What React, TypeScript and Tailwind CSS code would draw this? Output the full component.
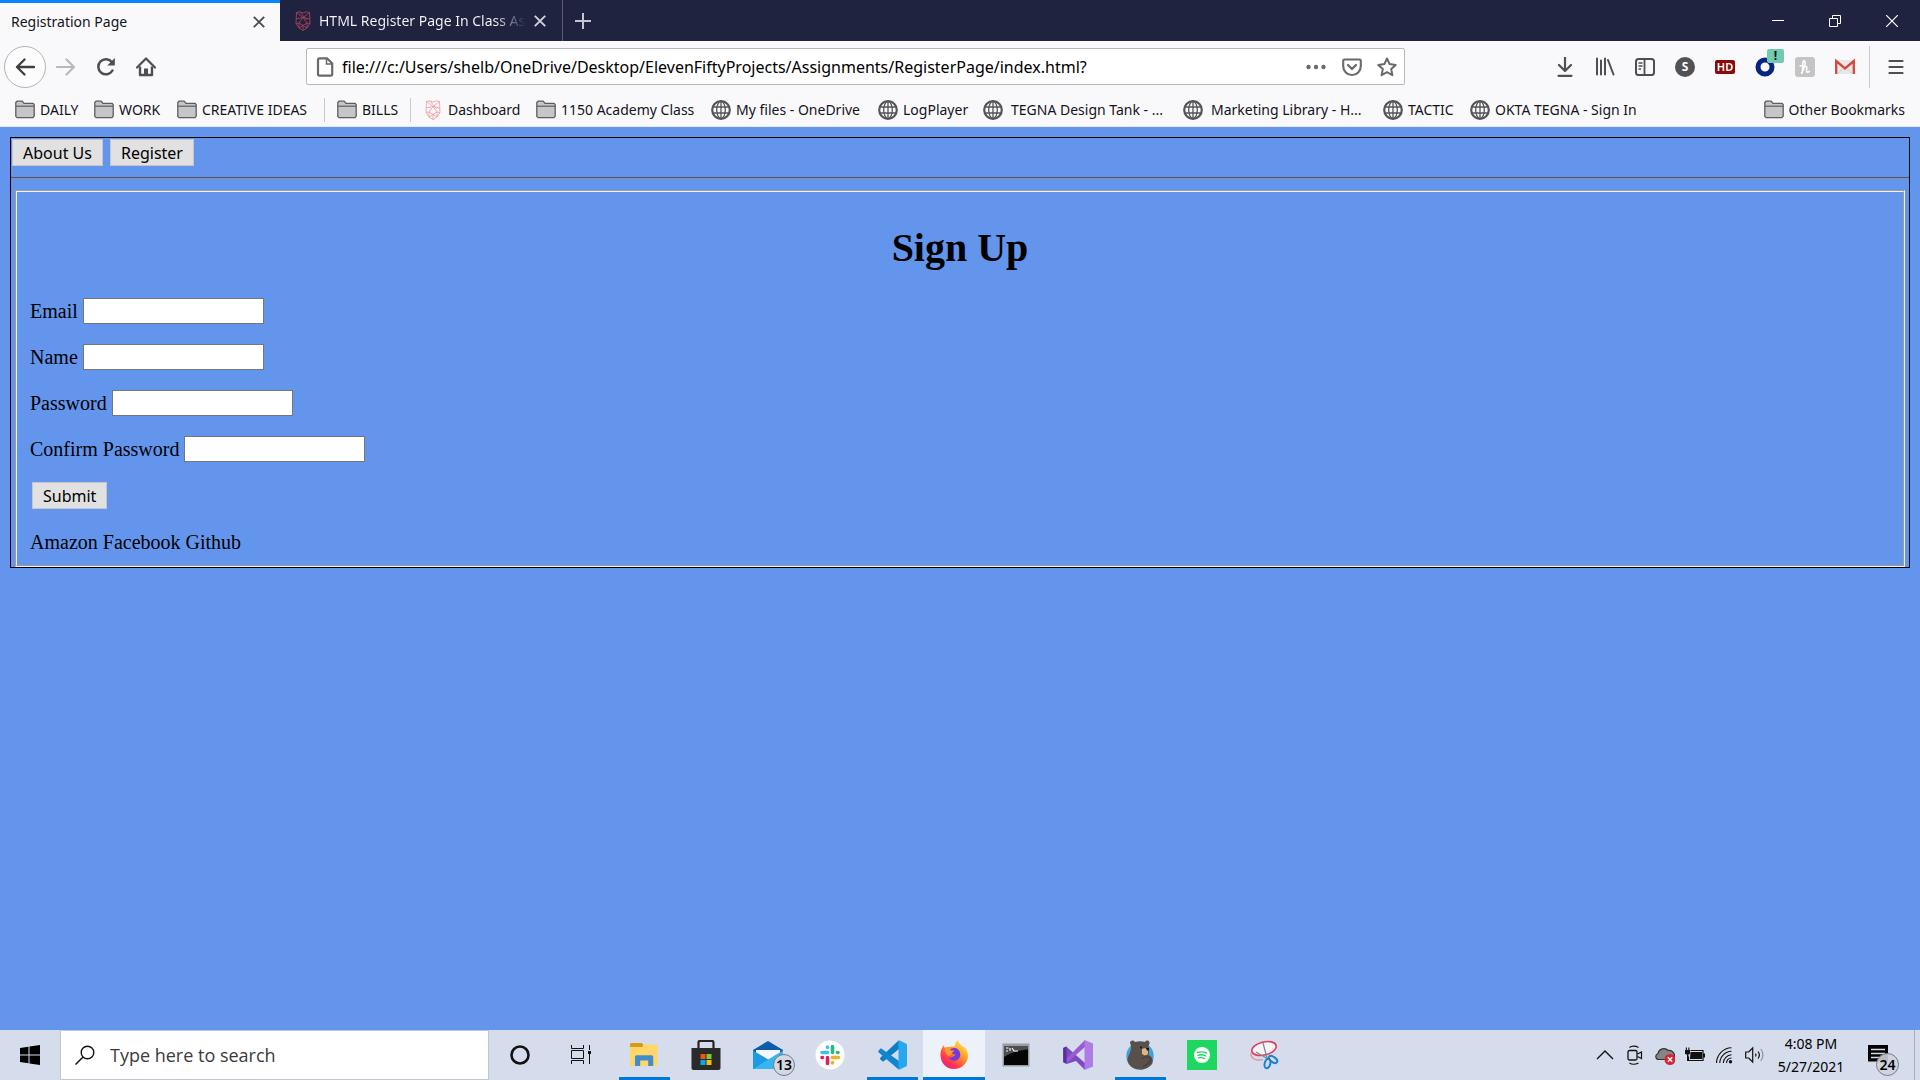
import React from "react";

type IconProps = { children: React.ReactNode; size?: string; box?: string };

function Icon({ children, size = "size-5", box = "0 0 20 20" }: IconProps) {
  return (
    <svg viewBox={box} className={`${size} shrink-0`} fill="none" aria-hidden="true">
      {children}
    </svg>
  );
}

const INK = "#4f4f52";

function FolderIcon() {
  return (
    <Icon>
      <path d="M.8 2.5 2 1.2h5.2L9 3.4h9.2l1 1.2v11.6l-1.2 1.4H2L.8 16.400z" fill="#c6c6c9" stroke="#5d5d60" strokeWidth="1.3" strokeLinejoin="round" />
      <path d="M1 6.200h18" stroke="#5d5d60" strokeWidth="1.2" />
    </Icon>
  );
}

function GlobeIcon() {
  return (
    <Icon>
      <circle cx="10" cy="10" r="8.800" stroke="#545456" strokeWidth="2.200" />
      <ellipse cx="10" cy="10" rx="4.300" ry="8.600" stroke="#545456" strokeWidth="1.300" />
      <path d="M10 1.500v17M2 7h16M2 13h16" stroke="#545456" strokeWidth="1.300" />
    </Icon>
  );
}

function ShieldIcon({ color }: { color: string }) {
  return (
    <Icon size="h-5 w-4" box="0 0 16 20">
      <path
        d="M1.500 1.500 4.500.8 8 2 11.500.8l3 .7.500 11L12 17l-4 2.500L4 17 1 12.500zM1.500 1.500 8 6.500l6.500-5M1 8l7-1.500L15 8M8 6.500 4 12l4 2.500 4-2.500-4-5.500M1 12.500l3-.5v5l4-2.500 4 2.500v-5l3 .5M4.500.8 12 9M8 14.500v5"
        stroke={color}
        strokeWidth=".8"
      />
    </Icon>
  );
}

function CloseIcon() {
  return (
    <Icon size="size-3" box="0 0 12 12">
      <path d="m.8.8 10.400 10.400M11.200.8.8 11.200" stroke="currentColor" strokeWidth="1.900" />
    </Icon>
  );
}

function TabStrip() {
  return (
    <header className="flex h-[41px] bg-[#202340] text-sm">
      <div className="flex w-[280px] items-center border-t-3 border-[#0a84ff] bg-[#f9f9fb] pl-[11px] pr-[15px]">
        <button className="flex-1 text-left text-[#15141a]">Registration Page</button>
        <button aria-label="Close Registration Page" className="text-[#4a4a4f]"><CloseIcon /></button>
      </div>
      <div className="flex w-[283px] items-center border-r border-[#5a5c78] pl-[15px] pr-4 text-[#f9f9fa]">
        <ShieldIcon color="#b5445c" />
        <button className="ml-2 mr-2 flex-1 overflow-hidden whitespace-nowrap bg-linear-to-r from-[#f9f9fa] from-85% to-[#202340] bg-clip-text text-left text-transparent">
          HTML Register Page In Class As
        </button>
        <button aria-label="Close HTML Register Page" className="text-[#d2d2dc]"><CloseIcon /></button>
      </div>
      <button aria-label="New tab" className="flex w-10 items-center justify-center text-[#c4c5d2]">
        <Icon size="size-4" box="0 0 16 16"><path d="M8 0v16M0 8h16" stroke="currentColor" strokeWidth="2" /></Icon>
      </button>
      <div className="ml-auto flex text-white">
        <button aria-label="Minimize" className="flex w-[57px] items-center justify-center">
          <Icon size="size-3" box="0 0 12 12"><path d="M0 5.500h12" stroke="currentColor" /></Icon>
        </button>
        <button aria-label="Restore" className="flex w-[57px] items-center justify-center">
          <Icon size="size-3" box="0 0 12 12"><path d="M.5 3.500h8v8h-8zM3.500 3V.5h8v8H9" stroke="currentColor" /></Icon>
        </button>
        <button aria-label="Close window" className="flex w-[57px] items-center justify-center">
          <Icon size="size-3" box="0 0 12 12"><path d="m0 0 12 12M12 0 0 12" stroke="currentColor" strokeWidth="1.200" /></Icon>
        </button>
      </div>
    </header>
  );
}

const tools: { label: string; icon: React.ReactNode }[] = [
  { label: "Downloads", icon: <Icon><path d="M10 0v13M4 8l6 6 6-6M3.500 18.800h13" stroke={INK} strokeWidth="2.200" strokeLinecap="round" strokeLinejoin="round" /></Icon> },
  { label: "Library", icon: <Icon><path d="M2 1.500v16M6 3.500v14M10 1.500v16M13 3l5.500 14.500" stroke={INK} strokeWidth="2" strokeLinecap="round" /></Icon> },
  { label: "Sidebars", icon: <Icon><rect x="1" y="2" width="18" height="16" rx="2.500" stroke={INK} strokeWidth="2" /><path d="M9.500 2v16" stroke={INK} strokeWidth="1.800" /><path d="M3.500 6h4M3.500 9h4M3.500 12h2.500" stroke={INK} strokeWidth="1.300" /></Icon> },
  { label: "Account", icon: <span className="flex size-5 items-center justify-center rounded-full bg-[#525254] text-xs font-bold text-white">S</span> },
  { label: "HD video", icon: <span className="flex h-[14px] w-5 items-center justify-center rounded-xs bg-[#8a0a0a] text-[11px] font-semibold leading-3 text-white">HD</span> },
  {
    label: "Okta",
    icon: (
      <span className="relative">
        <Icon><circle cx="10" cy="10" r="7" stroke="#05257f" strokeWidth="5" /></Icon>
        <span className="absolute -top-2 left-3 flex h-[14px] w-[17px] items-center justify-center rounded-xs bg-[#72cbb0] text-xs font-bold text-black">!</span>
      </span>
    ),
  },
  { label: "Honey", icon: <Icon><rect width="20" height="20" rx="3" fill="#c4c4c5" /><path d="M6.500 16C9 12 10.500 7.500 10 4.800 9.600 3 7.800 3.600 7.800 6L7.300 16M7.500 12c1.500-2.800 4.500-3.600 4.400-1.200l-.4 3.200c0 1.800 1.700 1.700 3 .3M5 8.800h3" stroke="#fff" strokeWidth="1.500" strokeLinecap="round" /></Icon> },
  { label: "Gmail", icon: <Icon><path d="M1 3h18v14H1z" fill="#e9e6e6" /><path d="M1.200 17V4L10 11.500 18.800 4v13" stroke="#d5463c" strokeWidth="2.300" /><path d="m3 16.500 5-5M17 16.500l-5-5" stroke="#d3d0d0" /></Icon> },
];

function Toolbar() {
  return (
    <div className="flex h-[51px] items-center bg-[#f9f9fb] pl-1">
      <button aria-label="Back" className="flex size-[42px] items-center justify-center rounded-full border border-[#b4b4b8] bg-[#fcfcfd]">
        <Icon><path d="M19 10H2M9.500 2.500 2 10l7.500 7.500" stroke="#3f3f42" strokeWidth="2.300" strokeLinecap="round" strokeLinejoin="round" /></Icon>
      </button>
      <button aria-label="Forward" disabled className="flex w-10 justify-center">
        <Icon><path d="M1 10h17M10.500 2.500 18 10l-7.500 7.500" stroke="#b9b9bc" strokeWidth="2.200" strokeLinecap="round" strokeLinejoin="round" /></Icon>
      </button>
      <button aria-label="Reload" className="flex w-10 justify-center">
        <Icon><path d="M16.500 13.500A7.600 7.600 0 1 1 16 5.200" stroke={INK} strokeWidth="2.500" strokeLinecap="round" /><path d="M18.800 1v7.500h-7.500z" fill={INK} /></Icon>
      </button>
      <button aria-label="Home" className="flex w-10 justify-center">
        <Icon><path d="m1 10.500 9-9 9 9" stroke={INK} strokeWidth="2.200" strokeLinecap="round" strokeLinejoin="round" /><path d="M4 9.500V18h12V9.500" stroke={INK} strokeWidth="2.400" strokeLinejoin="round" /><path d="M8 18v-6.500h4V18" fill={INK} /></Icon>
      </button>
      <div className="ml-[140px] mr-[140px] flex h-[37px] flex-1 items-center rounded-xs border border-[#b8b8bd] bg-white pl-2">
        <Icon><path d="M3 3c0-1 .8-1.700 1.700-1.700H12l5.200 5.200V17c0 1-.8 1.700-1.700 1.700H4.700C3.800 18.700 3 18 3 17z" stroke="#6a6a6d" strokeWidth="2.200" /><path d="M11.500 1.500V7H17" stroke="#6a6a6d" strokeWidth="1.500" /></Icon>
        <input
          aria-label="Address"
          defaultValue="file:///c:/Users/shelb/OneDrive/Desktop/ElevenFiftyProjects/Assignments/RegisterPage/index.html?"
          className="ml-[7px] h-8 min-w-0 flex-1 bg-transparent text-base text-black outline-none"
        />
        <button aria-label="Page actions" className="flex w-9 justify-center">
          <Icon><circle cx="2.500" cy="10" r="2.200" fill="#6a6a6d" /><circle cx="10" cy="10" r="2.200" fill="#6a6a6d" /><circle cx="17.500" cy="10" r="2.200" fill="#6a6a6d" /></Icon>
        </button>
        <button aria-label="Save to Pocket" className="flex w-9 justify-center">
          <Icon><path d="M2.500 2.500h15c.8 0 1.300.5 1.300 1.300v5.400a8.800 8.800 0 0 1-17.600 0V3.800c0-.8.500-1.300 1.300-1.300z" stroke="#6a6a6d" strokeWidth="2.100" /><path d="m6 8 4 4 4-4" stroke="#6a6a6d" strokeWidth="2.300" strokeLinecap="round" strokeLinejoin="round" /></Icon>
        </button>
        <button aria-label="Bookmark this page" className="flex w-[34px] justify-center">
          <Icon><path d="m10 1.500 2.600 5.600 6.100.8-4.500 4.200 1.200 6.100L10 15.200l-5.400 3 1.200-6.100L1.300 7.900l6.100-.8z" stroke="#6a6a6d" strokeWidth="2" strokeLinejoin="round" /></Icon>
        </button>
      </div>
      {tools.map((t) => (
        <button key={t.label} aria-label={t.label} className="flex w-10 justify-center">{t.icon}</button>
      ))}
      <span className="ml-1 h-[42px] w-px bg-[#c9c9cc]" />
      <button aria-label="Menu" className="mr-1 ml-1.5 flex w-10 justify-center">
        <Icon><path d="M3.500 4h13M3.500 10h13M3.500 16h13" stroke={INK} strokeWidth="2.200" strokeLinecap="round" /></Icon>
      </button>
    </div>
  );
}

type Mark = { label: string; icon: "folder" | "globe" | "shield"; width: string; gap?: string; divider?: boolean };

const marks: Mark[] = [
  { label: "DAILY", icon: "folder", width: "w-[79px]" },
  { label: "WORK", icon: "folder", width: "w-[83px]" },
  { label: "CREATIVE IDEAS", icon: "folder", width: "w-[147px]", divider: true },
  { label: "BILLS", icon: "folder", width: "w-[73px]", divider: true },
  { label: "Dashboard", icon: "shield", width: "w-[113px] pl-0.5", gap: "gap-[7px]" },
  { label: "1150 Academy Class", icon: "folder", width: "w-[175px]" },
  { label: "My files - OneDrive", icon: "globe", width: "w-[167px]" },
  { label: "LogPlayer", icon: "globe", width: "w-[105px]" },
  { label: "TEGNA Design Tank - ...", icon: "globe", width: "w-[200px]", gap: "gap-2" },
  { label: "Marketing Library - H...", icon: "globe", width: "w-[200px]", gap: "gap-2" },
  { label: "TACTIC", icon: "globe", width: "w-[87px]" },
  { label: "OKTA TEGNA - Sign In", icon: "globe", width: "w-[180px]" },
];

function BookmarksBar() {
  return (
    <nav aria-label="Bookmarks" className="flex h-[35px] items-center border-b border-[#e4e9f4] bg-[#f9f9fb] pt-0.5 pl-[15px] pr-[15px] text-sm text-[#15141a]">
      {marks.map((m) => (
        <React.Fragment key={m.label}>
          <a href="#" className={`flex shrink-0 items-center whitespace-nowrap ${m.gap ?? "gap-[5px]"} ${m.width}`}>
            {m.icon === "folder" && <FolderIcon />}
            {m.icon === "globe" && <GlobeIcon />}
            {m.icon === "shield" && <ShieldIcon color="#ee9a9f" />}
            {m.label}
          </a>
          {m.divider && <span className="mr-3 h-6 w-px shrink-0 bg-[#c9c9cc]" />}
        </React.Fragment>
      ))}
      <a href="#" className="ml-auto flex items-center gap-[5px] whitespace-nowrap">
        <FolderIcon />
        Other Bookmarks
      </a>
    </nav>
  );
}

const pageButton = "h-[27px] border border-[#c3c6cc] bg-[#e1e1e1] px-2.5 font-['Noto_Sans',sans-serif] text-base leading-6 text-black";

const fields = [
  { id: "email", label: "Email", type: "email" },
  { id: "name", label: "Name", type: "text" },
  { id: "password", label: "Password", type: "password" },
  { id: "confirm", label: "Confirm Password", type: "password" },
];

function RegisterPage() {
  return (
    <main className="flex-1 bg-[#6495ed] p-2.5 font-['Liberation_Serif',serif] text-xl text-black">
      <div className="border border-black">
        <div className="flex gap-[7px] p-px">
          <button className={pageButton}>About Us</button>
          <button className={pageButton}>Register</button>
        </div>
        <hr className="mt-2.5 border-t border-b border-t-[#4d5560] border-b-[#8793a8]" />
        <form onSubmit={(e) => e.preventDefault()} className="mx-1 mt-[11px] border-2 border-[#f0f0f0] px-[13px] pb-2.5 [border-style:groove]">
          <h1 className="mt-[33px] mb-[27px] text-center text-[40px] font-bold leading-[46px]">Sign Up</h1>
          {fields.map((f) => (
            <div key={f.id} className="mb-5 flex items-center gap-[5px]">
              <label htmlFor={f.id} className="leading-[26px]">{f.label}</label>
              <input id={f.id} type={f.type} className="h-[26px] w-[181px] border border-[#767676] bg-white px-1 text-base outline-none" />
            </div>
          ))}
          <button type="submit" className={`${pageButton} ml-0.5 block`}>Submit</button>
          <p className="mt-5 leading-[26px]">Amazon Facebook Github</p>
        </form>
      </div>
    </main>
  );
}

type App = { label: string; icon: React.ReactNode; state?: "open" | "active"; badge?: string };

const apps: App[] = [
  { label: "Cortana", icon: <Icon size="size-[30px]" box="0 0 30 30"><circle cx="15" cy="15" r="8.500" stroke="#111" strokeWidth="2.600" /></Icon> },
  { label: "Task View", icon: <Icon size="size-[30px]" box="0 0 30 30"><path d="M4.500 5v3.500h12V5M4.500 24v-3.500h12V24M4.500 10.500h12v8h-12zM22.500 5v5M22.500 14v10" stroke="#111" strokeWidth="1" /><path d="M21 11h3v3h-3z" fill="#111" /></Icon> },
  { label: "File Explorer", state: "open", icon: <Icon size="size-[30px]" box="0 0 30 30"><path d="M1 4.500C1 3.500 2 3 3 3h10l2 3-2 3H1z" fill="#d99a13" /><path d="M1 7h12l2-2.500h12c1 0 1.500.5 1.500 1.500v19c0 .6-.4 1-1 1H2c-.6 0-1-.4-1-1z" fill="#ffd667" /><path d="M6 26V17c0-1 .6-1.700 1.600-1.700h15c1 0 1.600.7 1.600 1.700v9h-5v-5.500h-8V26z" fill="#3f8dcd" /></Icon> },
  { label: "Microsoft Store", icon: <Icon size="size-[30px]" box="0 0 30 30"><path d="M7.500 9V2.500c0-1 .6-1.600 1.600-1.600h11.800c1 0 1.600.6 1.600 1.600V9" stroke="#252525" strokeWidth="2.200" /><path d="M.5 8h29v20c0 1.200-.8 2-2 2h-25c-1.200 0-2-.8-2-2z" fill="#292a29" /><path d="M9.500 14h5v5h-5z" fill="#f1511b" /><path d="M15.500 14h5v5h-5z" fill="#80cc28" /><path d="M9.500 20h5v5h-5z" fill="#00adef" /><path d="M15.500 20h5v5h-5z" fill="#fbbc09" /></Icon> },
  { label: "Mail", badge: "13", icon: <Icon size="size-[30px]" box="0 0 30 30"><path d="M0 10 15 1l15 9v18c0 .6-.4 1-1 1H0z" fill="#0b5cad" /><path d="M3 10h24v12H3z" fill="#f4f8fc" /><path d="M0 10.500 16 20 0 29z" fill="#1c9be4" /><path d="m30 10.500-15 9L0 29h29c.6 0 1-.4 1-1z" fill="#36b5ee" /></Icon> },
  {
    label: "Slack",
    icon: (
      <Icon size="size-[30px]" box="0 0 30 30">
        <circle cx="15" cy="15" r="14.500" fill="#fff" />
        <path d="M12.500 7v.500M7 12.500h5.500" stroke="#36c5f0" strokeWidth="3.600" strokeLinecap="round" />
        <path d="M17.500 6.500v6M23 12.500h-.500" stroke="#2eb67d" strokeWidth="3.600" strokeLinecap="round" />
        <path d="M17.500 17.500h6M17.500 22.500v.500" stroke="#ecb22e" strokeWidth="3.600" strokeLinecap="round" />
        <path d="M12.500 17.500v6M7 17.500h.500" stroke="#e01e5a" strokeWidth="3.600" strokeLinecap="round" />
      </Icon>
    ),
  },
  { label: "Visual Studio Code", state: "open", icon: <Icon size="size-[30px]" box="0 0 30 30"><path d="M21 1 3.500 17.500c-.6.600-.6 1.300 0 2L5 21c.6.500 1.300.5 2 0L22 9V1z" fill="#0f7dc4" /><path d="M21 29 1.700 12.500c-.6-.6-.6-1.300 0-2L3 9c.6-.6 1.300-.6 2-.1L22 21v8z" fill="#1186d0" /><path d="m21.500 0 7 3.200c1 .5 1.500 1.200 1.500 2.300v19c0 1.100-.5 1.800-1.500 2.300l-7 3.200z" fill="#27a7ee" /></Icon> },
  {
    label: "Firefox",
    state: "active",
    icon: (
      <Icon size="size-[30px]" box="0 0 30 30">
        <defs>
          <linearGradient id="fox" x1="24" y1="3" x2="6" y2="27" gradientUnits="userSpaceOnUse"><stop stopColor="#ffe23e" /><stop offset=".4" stopColor="#ff9428" /><stop offset=".75" stopColor="#ff3750" /><stop offset="1" stopColor="#e9207a" /></linearGradient>
        </defs>
        <path d="M1.500 13C2 9 3.500 7 5 5c0 1.500.5 2.500 1 3 1.500-1 3-1.200 4.500-1L16 6c0-2.500 1-4.500 3-6 .3 2.500 2 4 4 6 1 .5 1.500 1 2 2l.3-1.500C27.500 9 29 12 29 15.500 29 23 22.800 29 15 29S.8 23 1.500 13z" fill="url(#fox)" />
        <path d="M10 11c2-3 6-4 9-1.500 3 2.500 3 7 .5 9.500-3 3-8.500 2-10-2 2 1 4 .5 5.500-1 1-.8 2-.8 1.500-1.500-2 0-3-.5-4-2z" fill="#7b38d8" />
        <path d="M6 8c1.500-1.200 3.500-1.200 5-1-1 1.500-.5 3 1 3.500h3c.5 1.500-2.500 2-3 3-.3 1.800-1.300 2-2.500 2.500C7 14 5.500 11.500 6 8z" fill="#ff9a2b" />
      </Icon>
    ),
  },
  { label: "Command Prompt", icon: <Icon size="size-[30px]" box="0 0 30 30"><path d="M1.500 3.500h27v23h-27z" fill="#9b9da1" /><path d="M3 6h24v19H3z" fill="#050505" /><path d="M3 6h24v3.500C18 10 9 13 3 17z" fill="#4b4d50" /><path d="M5 8h2.500M5 11h2M9 8v3M11 8l2 3h4" stroke="#fff" strokeWidth="1.100" /></Icon> },
  { label: "Visual Studio", icon: <Icon size="size-[30px]" box="0 0 30 30"><path d="m.2 8 3-1.500L22 23v7L13 21 3.500 24l-3-1.500z" fill="#8049bf" /><path d="m.2 22 3 1.500L22 7V0L13 9z" fill="#9a5bd5" /><path d="M.2 8 3.500 6.500V23.500L.2 22z" fill="#57309c" /><path d="M21.500 0 30 3.500v23L21.500 30z" fill="#b07be6" /></Icon> },
  {
    label: "Bear app",
    state: "open",
    icon: (
      <Icon size="size-[30px]" box="0 0 30 30">
        <circle cx="15" cy="16" r="13.700" fill="#3fa3df" />
        <path d="M5 3c0-3 4-3.500 5-1 3-1 7-1 10 0 1.500-2.500 5-1.500 4.500 1.500-.2 1-.8 1.500-1 2.500.5 4 1 7 0 9 3 1 5 4 4 8-2 4-7 6.500-12 6.500C9 29.500 4 26 2.500 21c0-5 3-8 3.500-12 .3-2 0-4-1-6z" fill="#594f4b" />
        <path d="M17 9c2-1.500 5-1 6 1v4c-2 2-5 1.500-6-.500z" fill="#e2b47e" />
        <circle cx="16" cy="7.500" r=".9" fill="#111" /><path d="M21 8h3v2.500h-2z" fill="#111" />
        <path d="M17 19c2-3 7-3 9 0-1 4-5 6-8 8" stroke="#453c39" strokeWidth="1.200" />
      </Icon>
    ),
  },
  { label: "Spotify", icon: <Icon size="size-[30px]" box="0 0 30 30"><path d="M0 0h30v30H0z" fill="#1ed760" /><circle cx="15" cy="15" r="8" fill="#fff" /><path d="M10.500 12.500c3-1 6.500-.7 9.200.7M11 15.300c2.700-.8 5.500-.5 7.800.7M11.500 17.900c2.200-.6 4.300-.3 6.200.7" stroke="#1ed760" strokeWidth="1.400" strokeLinecap="round" /></Icon> },
  { label: "Snipping Tool", icon: <Icon size="size-[30px]" box="0 0 30 30"><ellipse cx="15" cy="8.500" rx="12.500" ry="6.500" transform="rotate(-14 15 8.500)" fill="#f8f5f6" stroke="#dc4055" strokeWidth="1.600" /><path d="M2 13c-1 5 5 8.500 12 6.500" stroke="#e89aa4" strokeWidth="1.600" /><path d="m14 3 4 15M7 12l12 7" stroke="#7c8990" strokeWidth="1.200" /><ellipse cx="18.500" cy="23.500" rx="2.800" ry="4.800" transform="rotate(15 18.500 23.500)" stroke="#1c7fd0" strokeWidth="2" /><ellipse cx="24" cy="19.500" rx="2.600" ry="4.800" transform="rotate(-55 24 19.500)" stroke="#1c7fd0" strokeWidth="2" /></Icon> },
];

function Taskbar() {
  return (
    <footer className="flex h-[50px] bg-[#d5dcec] text-black">
      <button aria-label="Start" className="flex w-[60px] items-center justify-center">
        <Icon><path d="m0 3 8.500-1.200V9.500H0zM9.500 1.600 20 0v9.500H9.500zM0 10.500h8.500v7.700L0 17zM9.500 10.500H20V20L9.500 18.400z" fill="#000" /></Icon>
      </button>
      <label className="flex w-[429px] items-center gap-[15px] border border-[#c2c6d0] bg-white pl-3.5">
        <Icon><circle cx="12.500" cy="7.500" r="6.300" stroke="#111" strokeWidth="1.400" /><path d="M8 12 .5 19.500" stroke="#111" strokeWidth="1.500" /></Icon>
        <input aria-label="Search" placeholder="Type here to search" className="min-w-0 flex-1 bg-transparent font-['Open_Sans',sans-serif] text-lg outline-none placeholder:text-[#3b3b3b]" />
      </label>
      {apps.map((a) => (
        <button
          key={a.label}
          aria-label={a.label}
          className={`flex w-[62px] flex-col items-center ${a.state === "active" ? "bg-[#edf1f9]" : ""}`}
        >
          <span className="relative flex flex-1 items-center">
            {a.icon}
            {a.badge && (
              <span className="absolute top-6 left-5 flex size-[22px] items-center justify-center rounded-full border border-[#777c84] bg-[#d3d9e2] text-sm font-semibold">{a.badge}</span>
            )}
          </span>
          {a.state && <span className={`-mt-[3px] h-[3px] bg-[#0078d7] ${a.state === "active" ? "w-full" : "w-[51px]"}`} />}
        </button>
      ))}
      <div className="ml-auto flex items-center">
        <button aria-label="Show hidden icons" className="flex w-[31px] justify-center">
          <Icon><path d="m2 14 8-8 8 8" stroke="#111" strokeWidth="1.400" /></Icon>
        </button>
        <button aria-label="Meet now" className="flex w-[30px] justify-center">
          <Icon><rect x="3" y="5.500" width="9" height="9.500" rx="1.500" stroke="#111" strokeWidth="1.300" /><path d="m12.500 9 4-2v6.500l-4-2M4.500 2.500c2-1.800 6-1.800 9 0M4.500 18c2 1.600 6 1.600 9 0" stroke="#111" strokeWidth="1.200" /></Icon>
        </button>
        <button aria-label="OneDrive" className="flex w-[30px] justify-center">
          <Icon><path d="M4 14.500C.5 14.500-.5 10 3 8.500 4 3.500 10 2 13 5.500c3.500-.5 6.500 2 6.500 5 0 2.500-1.500 4-3.500 4z" fill="#858585" stroke="#333" strokeWidth="1.200" /><circle cx="15" cy="14.500" r="5.500" fill="#d92233" /><path d="m12.800 12.300 4.400 4.400M17.200 12.300l-4.400 4.400" stroke="#fff" strokeWidth="1.400" /></Icon>
        </button>
        <button aria-label="Battery" className="flex w-[30px] justify-center">
          <Icon><path d="M5.500 5.500H18v10H3.500v-4" stroke="#111" strokeWidth="1.200" /><path d="M5.500 7H17v7H5zM18 8.500h2v4h-2zM0 5h5v3.500c0 1.500-5 1.500-5 0zM2 8h1.400v8H2zM.8 2.500h1.100V5H.8zM3.300 2.500h1.100V5H3.300z" fill="#111" /></Icon>
        </button>
        <button aria-label="Wi-Fi" className="flex w-[30px] justify-center">
          <Icon><path d="M1.500 18A15.500 15.500 0 0 1 16.500 2.800M4.800 18A12 12 0 0 1 16.500 6.300M8.300 18a8.500 8.500 0 0 1 8.200-8.200M11.500 18a5 5 0 0 1 5-5" stroke="#111" strokeWidth="1.100" /><circle cx="15.500" cy="16.800" r="1.700" fill="#111" /></Icon>
        </button>
        <button aria-label="Volume" className="flex w-[30px] justify-center">
          <Icon><path d="M.7 7v6h3l4 4V3l-4 4z" stroke="#111" strokeWidth="1.200" /><path d="M10.500 8.500c.7 1 .7 2 0 3M13 6.500c1.600 2 1.600 5 0 7" stroke="#111" strokeWidth="1.200" /><path d="M15.800 4c2.800 3.500 2.800 8.500 0 12" stroke="#8d9299" strokeWidth="1.200" /></Icon>
        </button>
        <button className="w-[82px] text-center text-sm leading-[23px]">
          4:08 PM
          <br />
          5/27/2021
        </button>
        <button aria-label="24 notifications" className="relative mr-3.5 ml-4 flex w-8 items-center">
          <Icon><path d="M0 0h20v16.500h-4V20l-3.500-3.500H0z" fill="#000" /><path d="M3 4.500h14M3 8.500h14M3 12.500h9" stroke="#d5dcec" strokeWidth="1.400" /></Icon>
          <span className="absolute top-2 left-2 flex size-[23px] items-center justify-center rounded-full border border-[#777c84] bg-[#cdd2dbe6] text-sm font-semibold">24</span>
        </button>
      </div>
      <span className="mr-[5px] w-px bg-[#a6acb9]" />
    </footer>
  );
}

export default function App() {
  return (
    <div className="flex min-h-screen flex-col font-['Noto_Sans',sans-serif]">
      <TabStrip />
      <Toolbar />
      <BookmarksBar />
      <RegisterPage />
      <Taskbar />
    </div>
  );
}
